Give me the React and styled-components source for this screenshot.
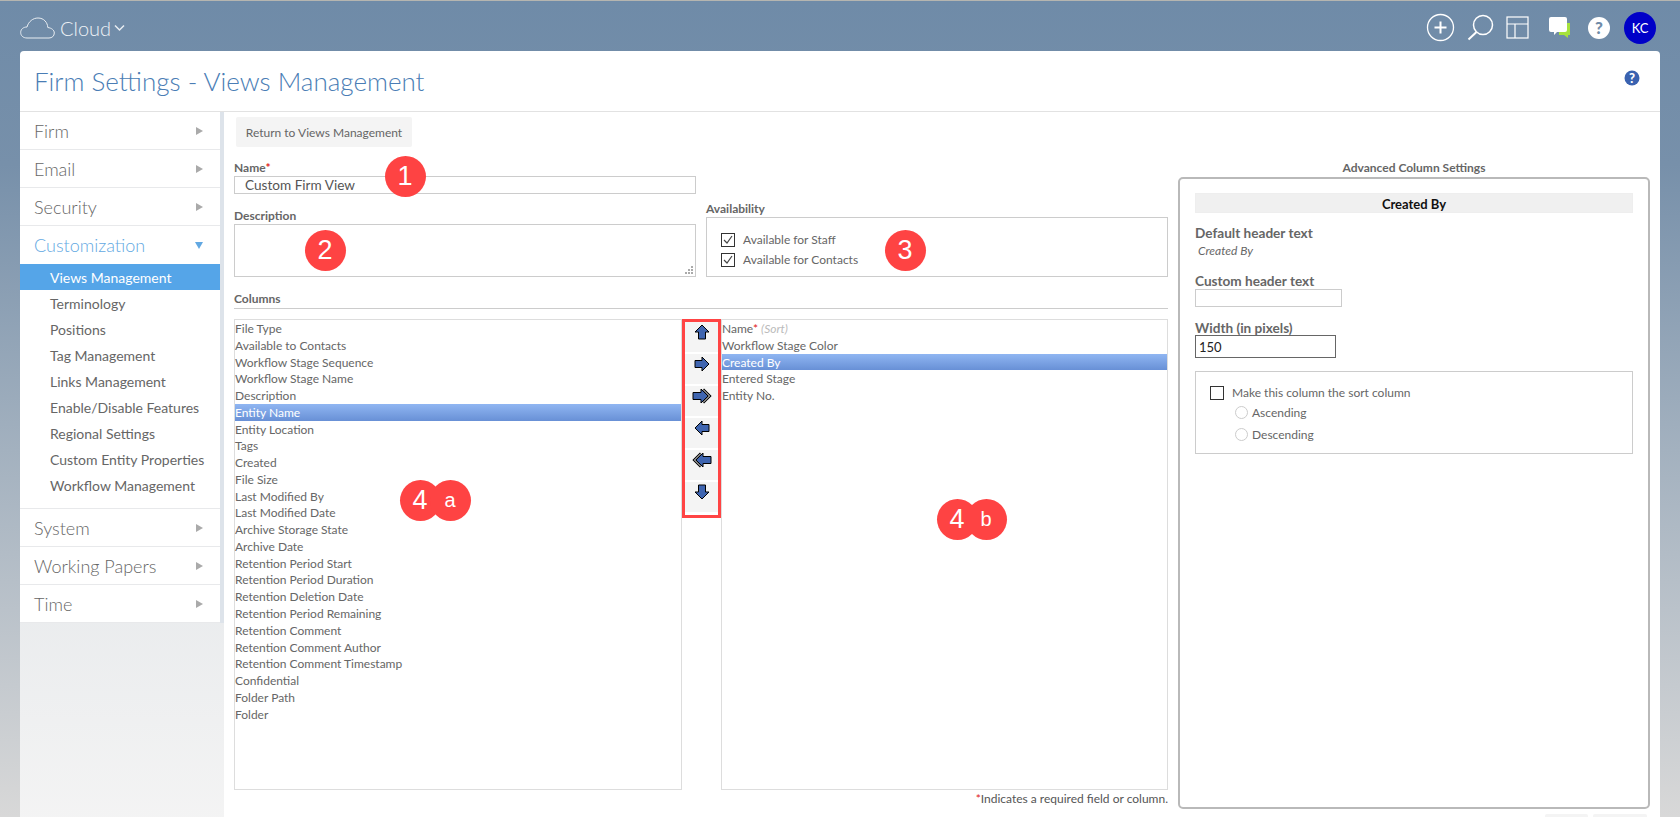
import React from "react";
import styled, { createGlobalStyle } from "styled-components";

const GlobalStyle = createGlobalStyle`
  html, body { margin: 0; padding: 0; height: 100%; overflow: hidden; }
  body { font-family: Lato, "Open Sans", sans-serif; color: #666; }
  * { box-sizing: border-box; }
`;

const Page = styled.div`
  position: relative;
  height: 817px;
  overflow: hidden;
  border-top: 1px solid #b5b5b0;
  background: linear-gradient(#6f8ba8 0%, #7790aa 20%, #a3b1bf 55%, #d8d8d8 100%);
`;

// top bar
const TopBar = styled.header`
  height: 50px;
  display: flex;
  align-items: center;
  justify-content: space-between;
  padding: 3px 24px 0 20px;
`;
const Brand = styled.div`
  display: flex;
  align-items: center;
  color: #eef2f6;
  font-size: 20px;
  font-weight: 300;
`;
const BrandName = styled.span`
  margin: 0 3px 0 5px;
`;
const TopIcons = styled.div`
  display: flex;
  align-items: center;
  gap: 12px;
`;
const Avatar = styled.div`
  width: 32px;
  height: 32px;
  border-radius: 50%;
  background: #0000c8;
  color: #fff;
  font-size: 13px;
  display: flex;
  align-items: center;
  justify-content: center;
`;

// card
const Card = styled.div`
  margin: 0 20px;
  height: 780px;
  background: #fff;
  border-radius: 4px 4px 0 0;
`;
const CardHeader = styled.div`
  height: 61px;
  border-bottom: 1px solid #e2e2e2;
  display: flex;
  align-items: center;
  justify-content: space-between;
  padding: 0 20px 0 14px;
`;
const Title = styled.h1`
  margin: 0;
  font-size: 26px;
  font-weight: 300;
  color: #4a7db5;
`;
const HelpIcon = styled.svg`
  margin-bottom: 6px;
`;
const CardBody = styled.div`
  display: flex;
  height: 720px;
`;

// sidebar
const Sidebar = styled.nav`
  width: 204px;
  flex: none;
  background: linear-gradient(#e4e7ea 50%, #f4f4f4 100%);
`;
const SideList = styled.div`
  width: 200px;
  background: #fff;
  box-shadow: 4px 0 0 #dde3ea;
`;
const SideItem = styled.div`
  height: 38px;
  display: flex;
  align-items: center;
  justify-content: space-between;
  padding: 0 17px 0 14px;
  font-size: 18px;
  font-weight: 300;
  color: ${(p) => (p.$active ? "#62a8e2" : "#666")};
  border-bottom: ${(p) => (p.$active ? "none" : "1px solid #e8e9eb")};
`;
const Caret = styled.span`
  width: 0;
  height: 0;
  ${(p) =>
    p.$open
      ? `border-left: 4px solid transparent; border-right: 4px solid transparent; border-top: 7px solid #62a8e2;`
      : `border-top: 4px solid transparent; border-bottom: 4px solid transparent; border-left: 7px solid #aaa;`}
`;
const SubList = styled.div`
  padding-bottom: 10px;
  border-bottom: 1px solid #e8e9eb;
`;
const SubItem = styled.div`
  height: 26px;
  display: flex;
  align-items: center;
  padding-left: 30px;
  font-size: 14px;
  color: ${(p) => (p.$selected ? "#fff" : "#666")};
  background: ${(p) => (p.$selected ? "#55a5e8" : "transparent")};
`;

// main
const Main = styled.main`
  flex: 1;
  padding: 5px 10px 0;
  min-width: 0;
`;
const ReturnButton = styled.button`
  display: block;
  width: 176px;
  height: 30px;
  padding: 0;
  margin: 0 0 13px 2px;
  border: none;
  border-radius: 2px;
  background: #f4f4f4;
  color: #666;
  white-space: nowrap;
  font: 12px Lato, sans-serif;
`;
const Columns = styled.div`
  display: flex;
  gap: 10px;
`;
const LeftPane = styled.div`
  width: 934px;
  flex: none;
`;
const TopFields = styled.div`
  display: grid;
  grid-template-columns: 462px 462px;
  gap: 10px;
  align-items: end;
`;
const Label = styled.div`
  height: 16px;
  line-height: 16px;
  font-size: 12px;
  font-weight: 700;
  color: #666;
`;
const Required = styled.span`
  color: #e02020;
`;
const TextInput = styled.input`
  display: block;
  width: ${(p) => p.$w || "100%"};
  height: 18px;
  padding: 0 10px;
  border: 1px solid #ccc;
  outline: none;
  color: #555;
  font: 13.6px Lato, sans-serif;
`;
const FieldGap = styled.div`
  height: 14px;
`;
const AreaWrap = styled.div`
  position: relative;
  height: 53px;
`;
const TextArea = styled.textarea`
  display: block;
  width: 100%;
  height: 53px;
  border: 1px solid #ccc;
  outline: none;
  resize: none;
`;
const Grip = styled.svg`
  position: absolute;
  right: 3px;
  bottom: 3px;
`;
const AvailabilityBox = styled.div`
  height: 60px;
  border: 1px solid #ccc;
  padding: 14px 14px 0;
  display: flex;
  flex-direction: column;
  gap: 5px;
`;
const CheckRow = styled.div`
  display: flex;
  align-items: center;
  gap: 8px;
  height: 15px;
  font-size: 12px;
  color: #666;
`;
const CheckBox = styled.span`
  width: 14px;
  height: 14px;
  flex: none;
  border: 1px solid #333;
  background: #fff;
  display: flex;
  align-items: center;
  justify-content: center;
`;
const SectionLabel = styled(Label)`
  margin-top: 14px;
  height: 18px;
  border-bottom: 1px solid #ccc;
`;
const ListRow = styled.div`
  display: flex;
  margin-top: 10px;
  height: 471px;
`;
const ListBox = styled.div`
  width: ${(p) => p.$w}px;
  flex: none;
  height: 471px;
  border: 1px solid #ddd;
`;
const ListRowItem = styled.div`
  height: 16.77px;
  line-height: 18px;
  font-size: 12px;
  white-space: nowrap;
  color: ${(p) => (p.$selected ? "#fff" : "#666")};
  background: ${(p) => (p.$selected ? "linear-gradient(#90b6f2, #6890d6)" : "transparent")};
`;
const SortHint = styled.i`
  color: #bbb;
`;
const ArrowColumn = styled.div`
  width: 39px;
  height: 199px;
  flex: none;
  border: 3px solid #ff4444;
  display: flex;
  flex-direction: column;
  gap: 2px;
  background: #fff;
`;
const ArrowButton = styled.button`
  height: 30px;
  flex: none;
  padding: 2px 0 0;
  border: none;
  background: #f4f4f4;
  display: flex;
  align-items: flex-start;
  justify-content: center;
`;
const Note = styled.div`
  margin-top: 1px;
  height: 16px;
  line-height: 16px;
  text-align: right;
  font-size: 12px;
  color: #555;
`;

// advanced panel
const RightPane = styled.div`
  width: 472px;
  flex: none;
`;
const PanelCaption = styled(Label)`
  text-align: center;
  margin-bottom: 1px;
`;
const Panel = styled.div`
  height: 632px;
  border: 2px solid #b9b9b9;
  border-radius: 5px;
  padding: 14px 15px 0;
`;
const PanelHead = styled.div`
  height: 20px;
  line-height: 20px;
  background: #f0f0f0;
  border: 1px solid #eee;
  text-align: center;
  font-size: 13px;
  font-weight: 700;
  color: #111;
`;
const PanelLabel = styled(Label)`
  margin-top: ${(p) => p.$top}px;
  font-size: 13.6px;
`;
const DefaultText = styled.div`
  margin: 2px 0 0 3px;
  height: 16px;
  line-height: 16px;
  font-size: 12px;
  font-style: italic;
  color: #666;
`;
const WidthInput = styled.input`
  display: block;
  width: 141px;
  height: 23px;
  margin-top: -1px;
  padding: 0 3px;
  border: 1px solid #666;
  outline: none;
  color: #222;
  font: 13px Lato, sans-serif;
`;
const SortBox = styled.div`
  margin-top: 13px;
  height: 83px;
  border: 1px solid #ccc;
  padding: 13px 14px 0;
`;
const RadioGroup = styled.div`
  margin: 2px 0 0 25px;
`;
const RadioRow = styled.div`
  display: flex;
  align-items: center;
  gap: 4px;
  height: 21.5px;
  font-size: 12px;
  color: #666;
`;
const Radio = styled.span`
  width: 13px;
  height: 13px;
  border-radius: 50%;
  border: 1px solid #ccc;
`;
const PanelActions = styled.div`
  display: flex;
  justify-content: flex-end;
  gap: 5px;
  margin: 5px 3px 0 0;
`;
const GhostButton = styled.div`
  width: ${(p) => p.$w}px;
  height: 20px;
  background: #f4f4f4;
  border-radius: 2px;
`;

// numbered callouts drawn over the screenshot
const Marker = styled.div`
  position: absolute;
  left: ${(p) => p.$x - 20.5}px;
  top: ${(p) => p.$y - 20.5}px;
  width: 41px;
  height: 41px;
  border-radius: 50%;
  background: #fe4343;
  color: #fff;
  font-family: "Liberation Sans", Arial, sans-serif;
  font-size: ${(p) => p.$size || 27}px;
  display: flex;
  align-items: center;
  justify-content: center;
`;

const sideTop = ["Firm", "Email", "Security"];
const sideBottom = ["System", "Working Papers", "Time"];
const subItems = [
  "Views Management", "Terminology", "Positions", "Tag Management", "Links Management",
  "Enable/Disable Features", "Regional Settings", "Custom Entity Properties", "Workflow Management",
];
const available = [
  "File Type", "Available to Contacts", "Workflow Stage Sequence", "Workflow Stage Name", "Description",
  "Entity Name", "Entity Location", "Tags", "Created", "File Size", "Last Modified By", "Last Modified Date",
  "Archive Storage State", "Archive Date", "Retention Period Start", "Retention Period Duration",
  "Retention Deletion Date", "Retention Period Remaining", "Retention Comment", "Retention Comment Author",
  "Retention Comment Timestamp", "Confidential", "Folder Path", "Folder",
];
const chosen = ["Workflow Stage Color", "Created By", "Entered Stage", "Entity No."];

const CheckMark = () => (
  <svg width="12" height="12" viewBox="0 0 12 12" fill="none" stroke="#444" strokeWidth="1.2">
    <path d="M2 6l3 3 5-7" />
  </svg>
);

const arrowPaths = {
  up: "M8 1 L15 8 H11.5 V15 H4.500 V8 H1 Z",
  right: "M15 8 L8 15 V11.5 H1 V4.500 H8 V1 Z",
  left: "M1 8 L8 1 V4.500 H15 V11.5 H8 V15 Z",
  down: "M8 15 L1 8 H4.500 V1 H11.5 V8 H15 Z",
};

const Arrow = ({ dir }) => (
  <svg width="16" height="16" viewBox="0 0 16 16">
    <path d={arrowPaths[dir]} fill="#3f65b0" stroke="#000" strokeWidth="1" />
  </svg>
);

const DoubleArrow = ({ flip }) => (
  <svg width="20" height="16" viewBox="0 0 20 16" style={{ transform: flip ? "scaleX(-1)" : "none" }}>
    <path d="M11 1.500 L17.500 8 L11 14.500" fill="none" stroke="#000" strokeWidth="3" />
    <path d="M11 1.500 L17.500 8 L11 14.500" fill="none" stroke="#fff" strokeWidth="1" />
    <path d="M16 8 L9 1 V4.500 H1 V11.5 H9 V15 Z" fill="#3f65b0" stroke="#000" strokeWidth="1" />
  </svg>
);

const TopBarIcons = () => (
  <TopIcons>
    <svg width="29" height="29" viewBox="0 0 29 29" fill="none" stroke="#fff">
      <circle cx="14.5" cy="14.5" r="13" strokeWidth="1.3" />
      <path d="M14.5 8.500v12M8.500 14.5h12" strokeWidth="2" />
    </svg>
    <svg width="27" height="27" viewBox="0 0 27 27" fill="none" stroke="#fff">
      <circle cx="16" cy="11" r="9.500" strokeWidth="1.5" />
      <path d="M9.500 18L1.500 25.5" strokeWidth="2" />
    </svg>
    <svg width="23" height="23" viewBox="0 0 23 23" fill="none" stroke="#fff" strokeWidth="1.2" style={{ marginRight: 8 }}>
      <rect x="1" y="1" width="21" height="21" />
      <path d="M1 8h21M9 8v14" />
    </svg>
    <svg width="21" height="21" viewBox="0 0 21 21">
      <path d="M10 6h11v12h-2v3l-4-3h-5z" fill="#a6e23c" />
      <path d="M2 0h14a2 2 0 0 1 2 2v11a2 2 0 0 1-2 2H8l-3 3v-3H2a2 2 0 0 1-2-2V2a2 2 0 0 1 2-2z" fill="#fff" />
    </svg>
    <svg width="24" height="24" viewBox="0 0 24 24" style={{ margin: "0 1px 0 5px" }}>
      <circle cx="12" cy="12" r="11" fill="#fff" />
      <text x="12" y="18" textAnchor="middle" fontSize="17" fontWeight="900" fontFamily="Lato" fill="#6f8ba8">?</text>
    </svg>
    <Avatar>KC</Avatar>
  </TopIcons>
);

const App = () => {
  return (
    <Page>
      <GlobalStyle />
      <TopBar>
        <Brand>
          <svg width="35" height="22" viewBox="0 0 35 22" fill="none" stroke="#e8edf2" strokeWidth="1">
            <path d="M7 21C3 21 .7 18.500 .7 15.500 .7 12 3.500 10 7 10 8.500 4.500 13 1 18 1c6 0 9.500 4.500 9.800 9.500 3.700.5 6.500 2.500 6.500 5.500s-2.300 5-5.300 5z" />
          </svg>
          <BrandName>Cloud</BrandName>
          <svg width="11" height="8" viewBox="0 0 11 8" fill="none" stroke="#e8edf2" strokeWidth="1.5">
            <path d="M1 1.500l4.500 4.500L10 1.500" />
          </svg>
        </Brand>
        <TopBarIcons />
      </TopBar>

      <Card>
        <CardHeader>
          <Title>Firm Settings - Views Management</Title>
          <HelpIcon width="16" height="16" viewBox="0 0 16 16">
            <circle cx="8" cy="8" r="7.500" fill="#3a62b0" />
            <text x="8" y="12.500" textAnchor="middle" fontSize="13" fontWeight="900" fontFamily="Lato" fill="#fff">?</text>
          </HelpIcon>
        </CardHeader>

        <CardBody>
          <Sidebar>
            <SideList>
              {sideTop.map((name) => (
                <SideItem key={name}>{name}<Caret /></SideItem>
              ))}
              <SideItem $active>Customization<Caret $open /></SideItem>
              <SubList>
                {subItems.map((name, i) => (
                  <SubItem key={name} $selected={i === 0}>{name}</SubItem>
                ))}
              </SubList>
              {sideBottom.map((name) => (
                <SideItem key={name}>{name}<Caret /></SideItem>
              ))}
            </SideList>
          </Sidebar>

          <Main>
            <ReturnButton>Return to Views Management</ReturnButton>
            <Columns>
              <LeftPane>
                <TopFields>
                  <div>
                    <Label>Name<Required>*</Required></Label>
                    <TextInput defaultValue="Custom Firm View" />
                    <FieldGap />
                    <Label>Description</Label>
                    <AreaWrap>
                      <TextArea />
                      <Grip width="8" height="8" viewBox="0 0 8 8" fill="#aaa">
                        <path d="M6 0h2v2H6zM3 3h2v2H3zM6 3h2v2H6zM0 6h2v2H0zM3 6h2v2H3zM6 6h2v2H6z" />
                      </Grip>
                    </AreaWrap>
                  </div>
                  <div>
                    <Label>Availability</Label>
                    <AvailabilityBox>
                      <CheckRow><CheckBox><CheckMark /></CheckBox>Available for Staff</CheckRow>
                      <CheckRow><CheckBox><CheckMark /></CheckBox>Available for Contacts</CheckRow>
                    </AvailabilityBox>
                  </div>
                </TopFields>

                <SectionLabel>Columns</SectionLabel>
                <ListRow>
                  <ListBox $w={448}>
                    {available.map((name) => (
                      <ListRowItem key={name} $selected={name === "Entity Name"}>{name}</ListRowItem>
                    ))}
                  </ListBox>
                  <ArrowColumn>
                    <ArrowButton><Arrow dir="up" /></ArrowButton>
                    <ArrowButton><Arrow dir="right" /></ArrowButton>
                    <ArrowButton><DoubleArrow /></ArrowButton>
                    <ArrowButton><Arrow dir="left" /></ArrowButton>
                    <ArrowButton><DoubleArrow flip /></ArrowButton>
                    <ArrowButton><Arrow dir="down" /></ArrowButton>
                  </ArrowColumn>
                  <ListBox $w={447}>
                    <ListRowItem>Name<Required>*</Required> <SortHint>(Sort)</SortHint></ListRowItem>
                    {chosen.map((name) => (
                      <ListRowItem key={name} $selected={name === "Created By"}>{name}</ListRowItem>
                    ))}
                  </ListBox>
                </ListRow>
                <Note><Required>*</Required>Indicates a required field or column.</Note>
              </LeftPane>

              <RightPane>
                <PanelCaption>Advanced Column Settings</PanelCaption>
                <Panel>
                  <PanelHead>Created By</PanelHead>
                  <PanelLabel $top={12}>Default header text</PanelLabel>
                  <DefaultText>Created By</DefaultText>
                  <PanelLabel $top={14}>Custom header text</PanelLabel>
                  <TextInput $w="147px" />
                  <PanelLabel $top={13}>Width (in pixels)</PanelLabel>
                  <WidthInput defaultValue="150" />
                  <SortBox>
                    <CheckRow><CheckBox />Make this column the sort column</CheckRow>
                    <RadioGroup>
                      <RadioRow><Radio />Ascending</RadioRow>
                      <RadioRow><Radio />Descending</RadioRow>
                    </RadioGroup>
                  </SortBox>
                </Panel>
                <PanelActions>
                  <GhostButton $w={43} />
                  <GhostButton $w={54} />
                </PanelActions>
              </RightPane>
            </Columns>
          </Main>
        </CardBody>
      </Card>

      <Marker $x={405} $y={175}>1</Marker>
      <Marker $x={325} $y={249}>2</Marker>
      <Marker $x={905} $y={249}>3</Marker>
      <Marker $x={420} $y={499}>4</Marker>
      <Marker $x={450} $y={499} $size={20}>a</Marker>
      <Marker $x={957} $y={518}>4</Marker>
      <Marker $x={986} $y={518} $size={20}>b</Marker>
    </Page>
  );
};

export default App;
